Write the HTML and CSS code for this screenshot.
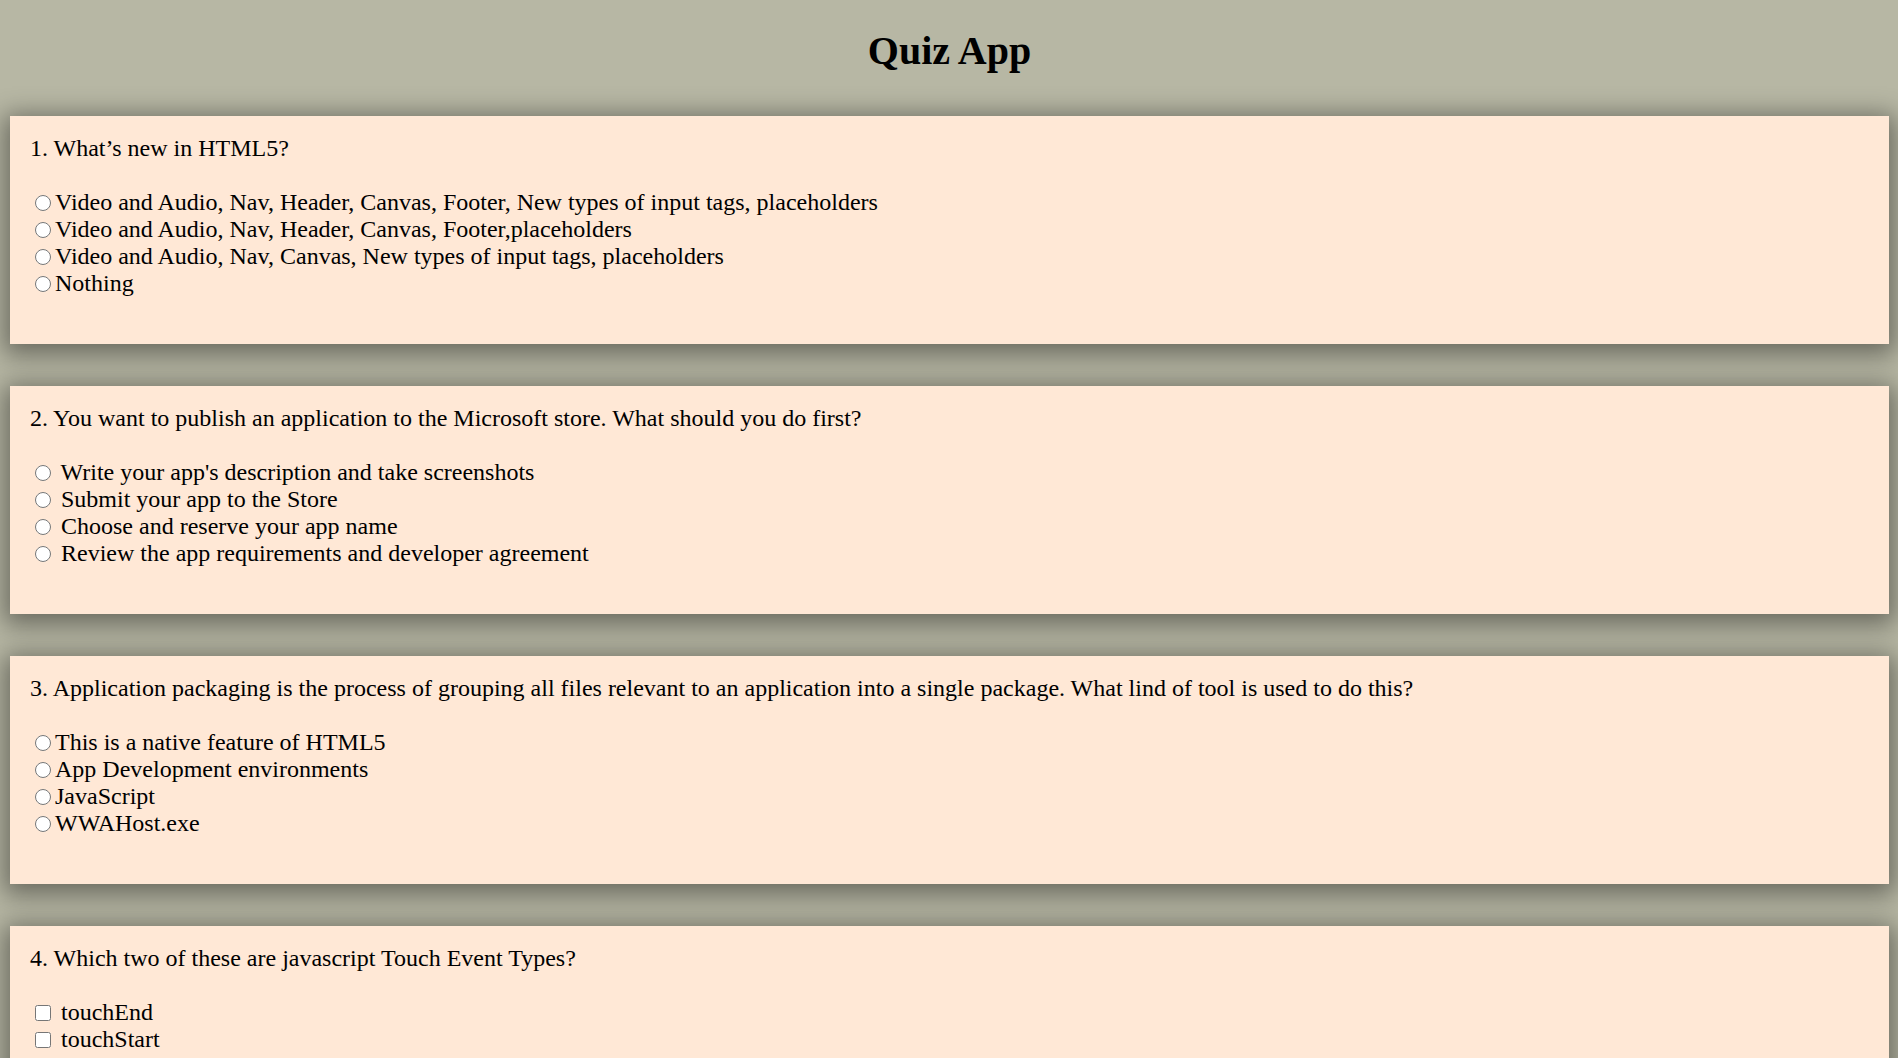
FILE: index.html
```html
<!DOCTYPE html>
<html lang="en">
<head>
<meta charset="utf-8">
<title>Quiz App</title>
<link rel="stylesheet" href="styles.css">
</head>
<body>
<h1 class="title">Quiz App</h1>
<main class="quiz">
  <section class="card">
    <p class="question">1. What’s new in HTML5?</p>
    <div class="options">
      <label class="option"><input class="radio" type="radio" name="q1">Video and Audio, Nav, Header, Canvas, Footer, New types of input tags, placeholders</label>
      <label class="option"><input class="radio" type="radio" name="q1">Video and Audio, Nav, Header, Canvas, Footer,placeholders</label>
      <label class="option"><input class="radio" type="radio" name="q1">Video and Audio, Nav, Canvas, New types of input tags, placeholders</label>
      <label class="option"><input class="radio" type="radio" name="q1">Nothing</label>
    </div>
  </section>
  <section class="card">
    <p class="question">2. You want to publish an application to the Microsoft store. What should you do first?</p>
    <div class="options">
      <label class="option"><input class="radio" type="radio" name="q2"> Write your app's description and take screenshots</label>
      <label class="option"><input class="radio" type="radio" name="q2"> Submit your app to the Store</label>
      <label class="option"><input class="radio" type="radio" name="q2"> Choose and reserve your app name</label>
      <label class="option"><input class="radio" type="radio" name="q2"> Review the app requirements and developer agreement</label>
    </div>
  </section>
  <section class="card">
    <p class="question">3. Application packaging is the process of grouping all files relevant to an application into a single package. What lind of tool is used to do this?</p>
    <div class="options">
      <label class="option"><input class="radio" type="radio" name="q3">This is a native feature of HTML5</label>
      <label class="option"><input class="radio" type="radio" name="q3">App Development environments</label>
      <label class="option"><input class="radio" type="radio" name="q3">JavaScript</label>
      <label class="option"><input class="radio" type="radio" name="q3">WWAHost.exe</label>
    </div>
  </section>
  <section class="card">
    <p class="question">4. Which two of these are javascript Touch Event Types?</p>
    <div class="options">
      <label class="option"><input class="check" type="checkbox" name="q4"> touchEnd</label>
      <label class="option"><input class="check" type="checkbox" name="q4"> touchStart</label>
      <label class="option"><input class="check" type="checkbox" name="q4"> touchMove</label>
      <label class="option"><input class="check" type="checkbox" name="q4"> touchCancel</label>
    </div>
  </section>
</main>
</body>
</html>
```
FILE: styles.css
```css
html {
  scrollbar-width: none;
}
html::-webkit-scrollbar {
  width: 0;
  height: 0;
}
body {
  margin: 0;
  padding: 0 9px 40px 10px;
  background: #b7b7a4;
  font-family: "Liberation Serif", "Times New Roman", serif;
  color: #000;
}
.title {
  margin: 29px 0 0;
  font-size: 40px;
  line-height: 44px;
  font-weight: bold;
  text-align: center;
}
.quiz {
  margin-top: 43px;
  display: flex;
  flex-direction: column;
  gap: 42px;
}
.card {
  background: #ffe8d6;
  padding: 19px 20px 20px;
  font-size: 24px;
  line-height: 27px;
  box-shadow: 0 5px 24px 6px rgba(0, 0, 0, 0.42);
}
.question {
  margin: 0 0 27px;
}
.options {
  margin-bottom: 27px;
}
.option {
  display: block;
}
.radio,
.check {
  width: 16px;
  height: 16px;
  margin: 0 4px 0 5px;
  vertical-align: -1px;
}
```
